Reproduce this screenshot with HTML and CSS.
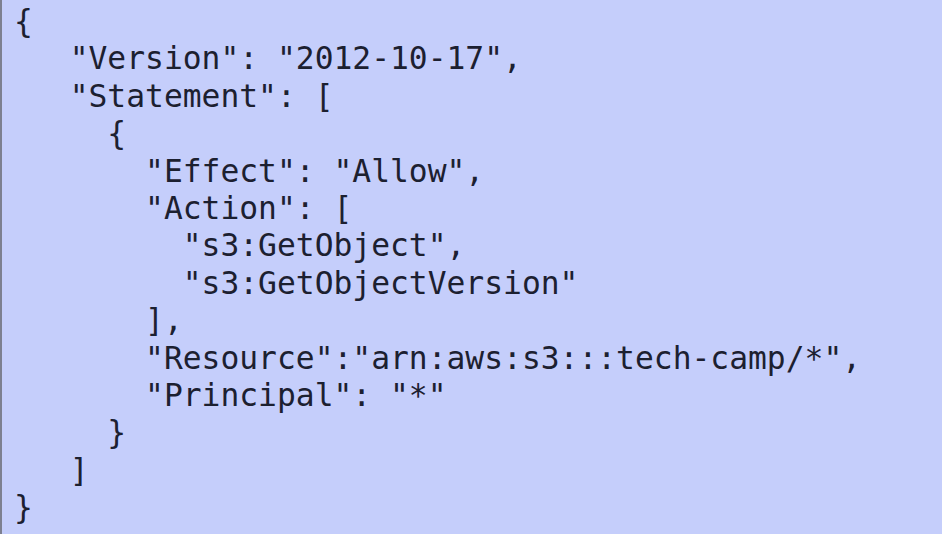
FILE: index.html
```html
<!DOCTYPE html>
<html>
<head>
<meta charset="utf-8">
<link rel="stylesheet" href="styles.css">
</head>
<body>
<div class="panel">
<pre class="code">{<span class="body">  "Version": "2012-10-17",
  "Statement": [
    {
      "Effect": "Allow",
      "Action": [
        "s3:GetObject",
        "s3:GetObjectVersion"
      ],
      "Resource":"arn:aws:s3:::tech-camp/*",
      "Principal": "*"
    }
  ]</span>}</pre>
</div>
</body>
</html>
```
FILE: styles.css
```css
html, body {
  margin: 0;
  padding: 0;
  background: #c5cefb;
}
.panel {
  width: 942px;
  height: 534px;
  box-sizing: border-box;
  border-left: 2px solid #7d8090;
  background: #c5cefb;
  overflow: hidden;
}
.code {
  margin: 0;
  padding: 3px 0 0 12px;
  font-family: "DejaVu Sans Mono", monospace;
  font-size: 31.3px;
  line-height: 37.4px;
  color: #1c2030;
}
.body {
  display: block;
  padding-left: 18px;
}
```
